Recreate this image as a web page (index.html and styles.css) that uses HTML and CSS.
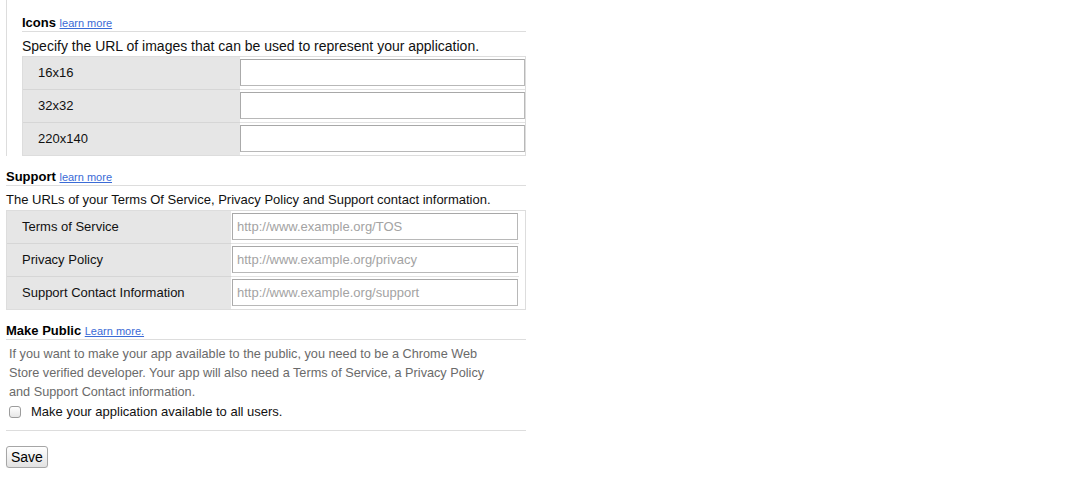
FILE: index.html
```html
<!DOCTYPE html>
<html lang="en">
<head>
<meta charset="utf-8">
<title>App settings</title>
<link rel="stylesheet" href="styles.css">
</head>
<body>
<div class="page">
  <div class="nested">
    <h3 class="section-title">Icons <a href="#" class="learn">learn more</a></h3>
    <p class="desc desc-lg">Specify the URL of images that can be used to represent your application.</p>
    <div class="fields icons">
      <div class="label-cell">16x16</div>
      <div class="input-cell"><input type="text" class="field"></div>
      <div class="label-cell">32x32</div>
      <div class="input-cell"><input type="text" class="field"></div>
      <div class="label-cell">220x140</div>
      <div class="input-cell"><input type="text" class="field"></div>
    </div>
  </div>

  <div class="section">
    <h3 class="section-title">Support <a href="#" class="learn">learn more</a></h3>
    <p class="desc">The URLs of your Terms Of Service, Privacy Policy and Support contact information.</p>
    <div class="fields support">
      <div class="label-cell">Terms of Service</div>
      <div class="input-cell"><input type="text" class="field" placeholder="http://www.example.org/TOS"></div>
      <div class="label-cell">Privacy Policy</div>
      <div class="input-cell"><input type="text" class="field" placeholder="http://www.example.org/privacy"></div>
      <div class="label-cell">Support Contact Information</div>
      <div class="input-cell"><input type="text" class="field" placeholder="http://www.example.org/support"></div>
    </div>
  </div>

  <div class="section">
    <h3 class="section-title">Make Public <a href="#" class="learn">Learn more.</a></h3>
    <p class="note">If you want to make your app available to the public, you need to be a Chrome Web Store verified developer. Your app will also need a Terms of Service, a Privacy Policy and Support Contact information.</p>
    <label class="check-row"><input type="checkbox" class="check"><span>Make your application available to all users.</span></label>
  </div>

  <hr class="divider">
  <button type="button" class="btn">Save</button>
</div>
</body>
</html>
```

FILE: styles.css
```css
html, body {
  margin: 0;
  padding: 0;
  background: #fff;
}

body {
  font-family: "Liberation Sans", Arial, Helvetica, sans-serif;
  font-size: 13px;
  color: #222;
}

.page {
  width: 520px;
  margin-left: 6px;
}

.nested {
  border-left: 1px solid #ddd;
  padding: 15px 0 0 15px;
}

.section {
  margin-top: 13px;
}

.section-title {
  margin: 0;
  font-size: 13px;
  font-weight: bold;
  line-height: 16px;
  color: #000;
  border-bottom: 1px solid #ddd;
}

.learn {
  font-size: 11px;
  font-weight: normal;
  color: #3a6bd6;
  text-decoration: underline;
}

.desc {
  margin: 6px 0 2px;
  line-height: 16px;
  color: #111;
}

.desc-lg {
  font-size: 14px;
}

.fields {
  display: grid;
  border: 1px solid #ddd;
}

.fields.icons {
  grid-template-columns: 217px 285px;
}

.fields.support {
  grid-template-columns: 224px 288px;
}

.label-cell {
  box-sizing: border-box;
  height: 33px;
  display: flex;
  align-items: center;
  padding: 0 0 2px 15px;
  background: #e6e6e6;
  border-bottom: 1px solid #d6d6d6;
  color: #111;
}

.input-cell {
  box-sizing: border-box;
  height: 33px;
  padding-top: 2px;
  border-bottom: 1px solid #e2e2e2;
  background: #fff;
}

.fields > :nth-last-child(-n+2) {
  border-bottom: none;
  height: 32px;
}

.support .input-cell {
  padding-left: 1px;
  padding-right: 1px;
}

.field {
  display: block;
  box-sizing: border-box;
  width: 100%;
  height: 27px;
  margin: 0;
  padding: 0 4px;
  border: 1px solid #b8b8b8;
  border-top-color: #a8a8a8;
  border-left-color: #aaa;
  border-radius: 0;
  font-family: "Liberation Sans", Arial, sans-serif;
  font-size: 13px;
  color: #222;
  background: #fff;
  outline: none;
}

.field::placeholder {
  color: #a3a3a3;
}

.note {
  margin: 5px 0 0;
  padding: 0 18px 0 3px;
  font-size: 12.7px;
  line-height: 19px;
  color: #6a6a6a;
}

.check-row {
  display: flex;
  align-items: center;
  height: 19px;
  color: #111;
}

.check {
  -webkit-appearance: none;
  appearance: none;
  box-sizing: border-box;
  width: 12px;
  height: 12px;
  margin: 0 10px 0 3px;
  border: 1px solid #9c9c9c;
  border-radius: 3px;
  background: linear-gradient(#fff, #e6e6e6);
}

.divider {
  margin: 9px 0 0;
  border: 0;
  height: 1px;
  background: #ddd;
}

.btn {
  display: block;
  margin-top: 15px;
  height: 22px;
  padding: 0 4px;
  border: 1px solid #a6a6a6;
  border-radius: 3px;
  background: linear-gradient(#ffffff, #e2e2e2);
  font-family: "Liberation Sans", Arial, sans-serif;
  font-size: 14px;
  color: #000;
  box-shadow: 0 1px 1px rgba(0,0,0,0.08);
}
```
